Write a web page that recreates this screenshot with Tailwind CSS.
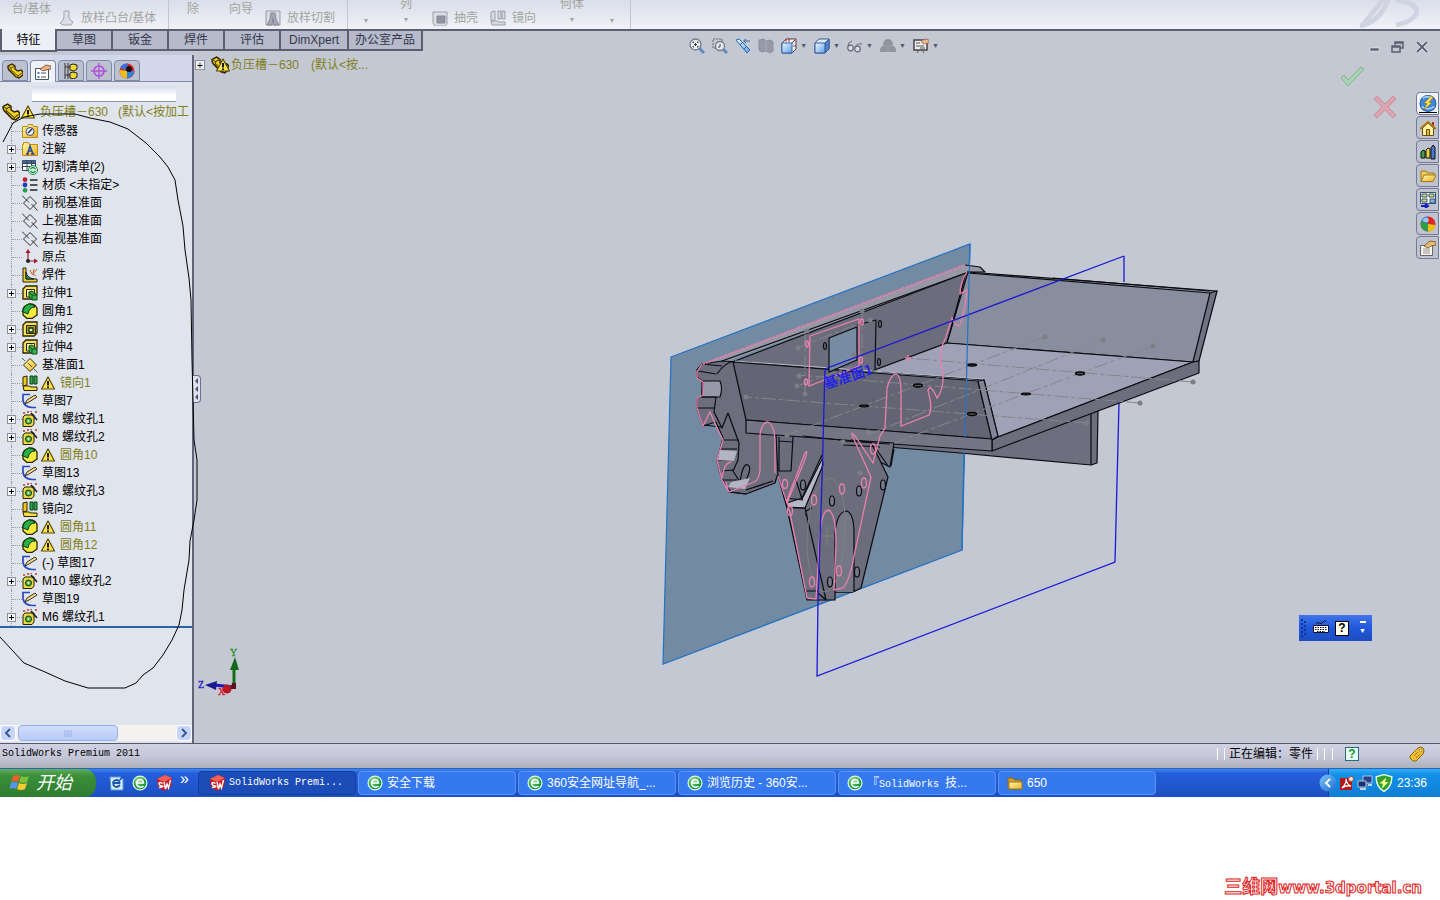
<!DOCTYPE html>
<html lang="zh-CN">
<head>
<meta charset="utf-8">
<meta name="viewport" content="width=device-width, initial-scale=1">
<title>SolidWorks Premium 2011</title>
<script src="https://cdn.jsdelivr.net/npm/@tailwindcss/browser@4"></script>
</head>
<body class="flex min-h-screen flex-col bg-white font-['Liberation_Sans','Noto_Sans_CJK_SC',sans-serif] text-xs text-black">

<!-- Shared icon definitions -->
<svg class="absolute size-0" aria-hidden="true">
  <linearGradient id="gold" x2="1" y2="1"><stop stop-color="#fffbb0"/><stop offset="1" stop-color="#e8b020"/></linearGradient>
  <linearGradient id="blueFace" y2="1" x2="1"><stop stop-color="#f4faff"/><stop offset="1" stop-color="#5a9ee8"/></linearGradient>
  <radialGradient id="greenBall" cx=".4" cy=".3"><stop stop-color="#a8f0a0"/><stop offset="1" stop-color="#159a35"/></radialGradient>
  <linearGradient id="glow" y2="1"><stop stop-color="#7cc4f8"/><stop offset="1" stop-color="#1a6cd0"/></linearGradient>
  <symbol id="part" viewBox="0 0 16 16"><path d="M1 3l4-2 3 2v3l3 2 3-1 2 2v3l-4 3-3-1-7-7-1-2z" fill="#f0d020" stroke="#2a2000" stroke-width="1.3"/><path d="M1 3l3 2 4-2M4 5v2l7 6 4-3M11 13v2" fill="none" stroke="#5a4300"/></symbol>
  <symbol id="warn" viewBox="0 0 16 16"><path d="M8 2l6.500 12h-13z" fill="#ffe450" stroke="#5a4800" stroke-width="1.200" stroke-linejoin="round"/><path d="M8 6v4.500M8 11.500v1.500" stroke="#000" stroke-width="1.800"/></symbol>
  <symbol id="sensor" viewBox="0 0 16 16"><path d="M.5 3.500h5l1-2h4l1 2h4v11H.5z" fill="url(#gold)" stroke="#c08a10"/><circle cx="8" cy="8.500" r="4" fill="#e8f0f8" stroke="#446"/><path d="M6 10l4-4" stroke="#225" stroke-width="1.500"/></symbol>
  <symbol id="note" viewBox="0 0 16 16"><path d="M.5 3.500h1v-2h5l1 2h8v11H.5z" fill="url(#gold)" stroke="#c08a10"/><path d="M4 13h3M9 13h3.500M5.500 13L8 5l3 8M6 10h4" fill="none" stroke="#234a9a" stroke-width="1.500"/></symbol>
  <symbol id="cut" viewBox="0 0 16 16"><path d="M.5 1.500h13v10H.5z" fill="#fff" stroke="#345"/><path d="M.5 1.500h13v3H.5z" fill="#47669a"/><path d="M.5 7.500h13M.5 4.500h13M5 2v10M9.500 2v10" stroke="#345"/><circle cx="11" cy="11" r="4.500" fill="#d8f8dc" stroke="#18904a"/><path d="M8.500 10q2.500-3 5 0M13.500 12q-2.500 3-5 0" fill="none" stroke="#18904a" stroke-width="1.300"/></symbol>
  <symbol id="mat" viewBox="0 0 16 16"><circle cx="3" cy="2.700" r="2.400" fill="#c02030"/><circle cx="3" cy="8" r="2.400" fill="#2040c0"/><circle cx="3" cy="13.300" r="2.400" fill="#20a050"/><path d="M8 3h7.500M8 8h7.500M8 13h7.500" stroke="#222" stroke-width="1.300"/></symbol>
  <symbol id="plane" viewBox="0 0 16 16"><path d="M8 1.500l6.500 6.500L8 14.500 1.500 8zM0 .5l7 7M9.500 9l6 6.500" fill="none" stroke="#333"/></symbol>
  <symbol id="planeY" viewBox="0 0 16 16"><path d="M8 1.500l6.500 6.500L8 14.500 1.500 8z" fill="url(#gold)" stroke="#3a3000"/><path d="M0 1l3 3M12 12l3.500 3.500" stroke="#3a6a30"/><path d="M6 6l4 4" stroke="#5a4800"/></symbol>
  <symbol id="origin" viewBox="0 0 16 16"><path d="M6 12V3M6 12h8" fill="none" stroke="#a01828" stroke-width="1.200"/><path d="M3.500 4L6 0l2.500 4zM12 9.500l4 2.500-4 2.500z" fill="#a01828"/><circle cx="6" cy="12" r="2" fill="#222"/></symbol>
  <symbol id="weld" viewBox="0 0 16 16"><path d="M1 1h3v11h11v3H1z" fill="#f0d020" stroke="#222"/><path d="M4 12V5q1 6 8 7z" fill="#28a040" stroke="#123"/><path d="M15 2l-5 6M8 3l2 4M14 9l-3-2M12 2l-1 4" stroke="#c06030"/></symbol>
  <symbol id="ext" viewBox="0 0 16 16"><path d="M1 4l3-3h11v8l-2 5H1z" fill="#f4e060" stroke="#2a2400" stroke-width="1.300"/><path d="M4.500 4.500h8V12h-8z" fill="#f8f0a0" stroke="#2a2400"/><path d="M7 7l3-1 5 4v5h-5l-3-3z" fill="#3ab04a" stroke="#0a4a18"/><path d="M7 7l3 3v5M10 10h5" fill="none" stroke="#0a4a18"/></symbol>
  <symbol id="extcut" viewBox="0 0 16 16"><path d="M1 4l3-3h11v11l-3 3H1z" fill="#f4e060" stroke="#2a2400" stroke-width="1.300"/><path d="M4.500 4.500h9v8h-9z" fill="#b89c20" stroke="#2a2400"/><path d="M7 7h4v4H7z" fill="#d0f0c0" stroke="#0a3a10" stroke-width="1.300"/></symbol>
  <symbol id="fillet" viewBox="0 0 16 16"><path d="M1 9Q0 3 7 1q5-1 8 4v7l-5 3.500H5L1 12z" fill="#f8e840" stroke="#2a2400" stroke-width="1.300"/><path d="M1 9Q1 3 7 1q4 0 6 3-6 0-7 7z" fill="#28b048" stroke="#0a4018"/></symbol>
  <symbol id="mirror" viewBox="0 0 16 16"><path d="M1 2l4-1v9l-4 1z" fill="#f0c820" stroke="#2a2400"/><path d="M8 1h3v8H8zM12 1h3v8h-3z" fill="#30a848" stroke="#0a4018"/><path d="M1 11h6l2 1h6v3.500H2z" fill="#f8e040" stroke="#2a2400"/></symbol>
  <symbol id="sketch" viewBox="0 0 16 16"><path d="M8 1.500H1v6Q2 14 10 14.500h4" fill="none" stroke="#2a48c0" stroke-width="1.700"/><path d="M3 11l2-4 8-5 2 2-8 5z" fill="#f4d890" stroke="#3a3020"/></symbol>
  <symbol id="hole" viewBox="0 0 16 16"><path d="M1 6l2-2h9v9l-2 2.500H1z" fill="#e8d848" stroke="#2a2400"/><circle cx="6.500" cy="10" r="3" fill="#58b848" stroke="#0a3a10"/><circle cx="6.500" cy="10" r="1" fill="#e8ffd0"/><path d="M9 2l6 7" stroke="#222" stroke-width="1.700"/><path d="M1 2h2M5 1h2M8 0h2M13 1h2" stroke="#c03820" stroke-width="1.500"/></symbol>
  <symbol id="props" viewBox="0 0 16 16"><path d="M.5 4.500h13v11H.5z" fill="#fff" stroke="#456"/><path d="M2.500 8h2v2h-2zM2.500 12h2v2h-2z" fill="#4a78c0"/><path d="M6 9h5M6 13h5" stroke="#555"/><path d="M5 5l6-4 5 1v3l-5 1-3 1z" fill="#e8b088" stroke="#7a4a28" stroke-width=".8"/></symbol>
  <symbol id="sheet" viewBox="0 0 16 16"><path d="M.5 5.500h12v10H.5z" fill="#f4f2ea" stroke="#666"/><path d="M3 9h7M3 11h7M3 13h7" stroke="#999"/><path d="M4 6l6-5 6 1v3l-5 1-3 2z" fill="#e8bc78" stroke="#6a4a18" stroke-width=".8"/></symbol>
  <symbol id="config" viewBox="0 0 16 16"><path d="M2 0v16M2 4h5M2 12h5M5 0v16" stroke="#333"/><path d="M7 2l3-1 4 1v4l-3 2-4-1zM7 10l3-1 4 1v4l-3 2-4-1z" fill="#f0d830" stroke="#222"/></symbol>
  <symbol id="target" viewBox="0 0 16 16"><circle cx="8" cy="8" r="5" fill="none" stroke="#b050d8" stroke-width="1.700"/><path d="M8 0v16M0 8h16" stroke="#b050d8" stroke-width="1.300"/></symbol>
  <symbol id="ball" viewBox="0 0 16 16"><circle cx="8" cy="8" r="7.500" fill="#d82828"/><path d="M8 8L1 5Q3 0 8 .5z" fill="#4888d8"/><path d="M8 8L1 5Q-1 14 8 15.500z" fill="#28a048"/><path d="M8 8v7.500Q15 15 15.500 9z" fill="#f0c018"/><ellipse cx="6" cy="4" rx="3" ry="2" fill="#fff" opacity=".5"/></symbol>
  <symbol id="appear" viewBox="0 0 16 16"><circle cx="8" cy="8" r="7.500" fill="#d82828"/><path d="M8 8L1 5Q3 0 9 .5z" fill="#4070d8"/><path d="M8 8L.6 7Q1 15 8 15.500z" fill="#f0c010"/><path d="M8 8v7.500Q14 15 15.500 8z" fill="#3080e0"/><circle cx="10" cy="6" r="3" fill="#200808"/></symbol>
  <symbol id="e360" viewBox="0 0 16 16"><circle cx="8" cy="8" r="7.500" fill="#e8ffe8"/><circle cx="8" cy="8" r="6.300" fill="url(#greenBall)"/><path d="M11.500 11Q9 13.500 5.500 11 3 7.500 6.500 5q4-2 5 3H5" fill="none" stroke="#fff" stroke-width="1.600"/></symbol>
  <symbol id="swlogo" viewBox="0 0 16 16"><path d="M1 4l8-4 7 3-1 9-7 4-6-4z" fill="#c81820"/><path d="M1 4l8-4 7 3-8 4z" fill="#f06058"/><path d="M6.500 8.500Q3 6.500 3 8.500t3 2.500-3 1.500M8 7l1.500 7 1.500-5 1.500 4 2-8" fill="none" stroke="#fff" stroke-width="1.400"/></symbol>
  <symbol id="folder" viewBox="0 0 16 16"><path d="M1 13V3h5l1.500 2H14v2" fill="#f0c850" stroke="#a07818"/><path d="M1 13.500L4 7h12l-3 6.500z" fill="url(#gold)" stroke="#a07818"/></symbol>
  <symbol id="folderShut" viewBox="0 0 16 16"><path d="M1 13V3h5l1.500 2H14v9H2z" fill="#d8a030" stroke="#8a6410"/><path d="M2 14V7h13v7z" fill="url(#gold)" stroke="#a07818"/></symbol>
  <symbol id="ie" viewBox="0 0 16 16"><path d="M2 2h11l2 2v11H3z" fill="#d8ecf8" stroke="#5a98d0"/><path d="M12 5l3-4M12 10Q8 14 5.500 10 4 6 8 5q4 0 3.500 3H6" fill="none" stroke="#1858b0" stroke-width="1.800"/></symbol>
  <symbol id="mag" viewBox="0 0 16 16"><path d="M10 10l5 5" stroke="#5f8cc0" stroke-width="3"/><circle cx="6.500" cy="6.500" r="5.500" fill="#e8edf3" stroke="#737985" stroke-width="1.300"/><path d="M4 5V4h1M8 4h1v1M9 8v1H8M5 9H4V8M5 6.500h3M6.500 5v3" fill="none" stroke="#333"/></symbol>
  <symbol id="magbox" viewBox="0 0 16 16"><path d="M1 1h9v9H1z" fill="none" stroke="#666" stroke-dasharray="2 1"/><path d="M11 11l4 4" stroke="#5f8cc0" stroke-width="3"/><circle cx="8" cy="8" r="4.500" fill="#e4e9f2" stroke="#737985" stroke-width="1.300"/><path d="M8 6v3H6" fill="none" stroke="#444"/></symbol>
  <symbol id="scope" viewBox="0 0 16 16"><path d="M1 2l3-1 11 11-3 3z" fill="url(#blueFace)" stroke="#2868b0"/><path d="M5 7l3-3M9 11l3-3" stroke="#2868b0"/><path d="M15 3H9M11 1L8.500 3 11 5" fill="none" stroke="#4060b0"/></symbol>
  <symbol id="section" viewBox="0 0 16 16"><path d="M1 2l5-1 2 2 5-1 2 2v9l-3 2-4-2-4 1-3-2z" fill="#949aa8" stroke="#8a90a0"/><path d="M8 3v10" stroke="#aeb3c0"/></symbol>
  <symbol id="vieworient" viewBox="0 0 16 16"><path d="M1 5l4-4h10v10l-4 4H1z" fill="#eef2f8" stroke="#444"/><path d="M1 5h10v10H1z" fill="url(#blueFace)" stroke="#2868b0"/><path d="M8 0v4M15 8h-3M11 5l4-4M5 1v3" stroke="#c02828"/></symbol>
  <symbol id="cube" viewBox="0 0 16 16"><path d="M1 5l4-4h10v10l-4 4H1z" fill="#d8eafc" stroke="#3a5a98"/><path d="M11 5l4-4v10l-4 4z" fill="#5088d0" stroke="#3a5a98"/><path d="M1 5h10v10H1z" fill="url(#blueFace)" stroke="#3a5a98"/></symbol>
  <symbol id="glasses" viewBox="0 0 16 16"><path d="M1 8q0-4 4-5M8 9q2-4 7-3" fill="none" stroke="#667"/><circle cx="3.500" cy="10" r="2.800" fill="#d8dde6" stroke="#667" stroke-width="1.200"/><circle cx="10.500" cy="11" r="2.800" fill="#d8dde6" stroke="#667" stroke-width="1.200"/></symbol>
  <symbol id="scene" viewBox="0 0 16 16"><path d="M0 12q1-4 3-4Q3 1 8 1t5 7q2 0 3 4v2H0z" fill="#8e939e"/><path d="M3 8h10M8 8v6" stroke="#a0a5b0"/></symbol>
  <symbol id="screen" viewBox="0 0 16 16"><path d="M1 2h13v10H1z" fill="#eee" stroke="#444" stroke-width="1.500"/><path d="M3 5h4M3 8h8M4 15l2-3M11 15l-2-3M7 10h5" stroke="#555"/><path d="M8 3l4-2 4 1v3l-6 1z" fill="#e8b888" stroke="#855" stroke-width=".6"/></symbol>
  <symbol id="home" viewBox="0 0 16 16"><path d="M12 2h2v5h-2z" fill="#b03020"/><path d="M2.500 8v7.500h11V8L8 3z" fill="#fff2a0" stroke="#6a4a10"/><path d="M0 9l8-7 8 7" fill="none" stroke="#a87818" stroke-width="2"/><path d="M6.500 9.500h3v6h-3z" fill="#f0b838" stroke="#6a4a10"/></symbol>
  <symbol id="library" viewBox="0 0 16 16"><path d="M1 8l2-2 2 1v7H1z" fill="#40a048" stroke="#111"/><path d="M6 6l2-2 2 1v9H6z" fill="#e8d838" stroke="#111"/><path d="M11 4l2-3 2 2v12h-4z" fill="#4878d0" stroke="#111"/></symbol>
  <symbol id="palette" viewBox="0 0 16 16"><path d="M.5.5h15v11H.5z" fill="#f8faf0" stroke="#357"/><path d="M2 2h5v3H2zM9 2h5v3H9zM2 7h5v3H2z" fill="#e0dc70" stroke="#357"/><path d="M10 7h5v4h-5z" fill="#8ab0e0" stroke="#357"/><path d="M1 14h6M5 11.500L8 14l-3 2" fill="none" stroke="#1820c0" stroke-width="2"/></symbol>
  <symbol id="globe" viewBox="0 0 16 16"><circle cx="8" cy="8" r="7.500" fill="#3c88e0" stroke="#28569a"/><path d="M3 3q5-3 9 0M2 11q6 4 12 0" fill="none" stroke="#a8d4ff" stroke-width="1.500"/><path d="M11 1L4 8h3l-3 6 8-7H9l4-5z" fill="#ffe850" stroke="#886a10" stroke-width=".6"/></symbol>
  <symbol id="loft" viewBox="0 0 16 16"><path d="M5 1h5v6q0 3 4 5l-2 3H4l-3-2q4-3 4-6z" fill="#dcdee7" stroke="#a1a4b1"/></symbol>
  <symbol id="loftcut" viewBox="0 0 16 16"><path d="M1 1h14v14H1z" fill="#d8dae4" stroke="#9a9eaa"/><path d="M6 3h4q0 7 4 12H9L8 8l-1 7H2Q6 10 6 3z" fill="#a5a8b4" stroke="#858996"/></symbol>
  <symbol id="shell" viewBox="0 0 16 16"><path d="M1 2h14v12l-2 2H3L1 13z" fill="#dcdee6" stroke="#9a9eaa"/><path d="M5 6h8v7H5z" fill="#9296a4" stroke="#858996"/></symbol>
  <symbol id="mirrorG" viewBox="0 0 16 16"><path d="M1 2l4-1v9l-4 1zM8 1h3v8H8zM12 1h3v8h-3zM1 11h6l2 1h6v3H2z" fill="#d8dae2" stroke="#9a9eaa"/></symbol>
</svg>

<!-- Command ribbon, scrolled so only its lower part shows -->
<header class="relative flex h-[31px] overflow-hidden border-b-2 border-[#5b5f72] bg-linear-to-b from-[#dadeea] to-[#f0f2f7] text-[#a2a59f]">
  <div class="flex w-[169px] shrink-0 border-r border-[#c2c5d2] leading-4">
    <button class="w-[59px] pl-1 pb-3">台/基体</button>
    <button class="flex items-center gap-1.5 pt-1.5"><svg class="size-4"><use href="#loft"/></svg>放样凸台/基体</button>
  </div>
  <div class="flex w-[179px] shrink-0 border-r border-[#c2c5d2] leading-4">
    <button class="w-12 pb-3">除</button>
    <button class="w-12 pb-3">向导</button>
    <button class="flex items-center gap-1.5 pt-1.5"><svg class="size-4"><use href="#loftcut"/></svg>放样切割</button>
  </div>
  <div class="flex w-[283px] shrink-0 border-r border-[#c2c5d2] leading-4">
    <button class="w-9 pt-3 text-[8px]">▾</button>
    <button class="flex w-11 flex-col items-center"><span class="-mt-1">列</span><span class="text-[8px]">▾</span></button>
    <button class="ml-1 flex items-center gap-1.5 pt-1.5"><svg class="size-4"><use href="#shell"/></svg>抽壳</button>
    <button class="ml-3 flex items-center gap-1.5 pt-1.5"><svg class="size-4"><use href="#mirrorG"/></svg>镜向</button>
    <button class="ml-3 flex w-12 flex-col items-center"><span class="-mt-1">何体</span><span class="text-[8px]">▾</span></button>
    <button class="w-8 pt-3 text-[8px]">▾</button>
  </div>
  <svg class="ml-auto h-8 w-24 shrink-0" viewBox="0 0 96 32"><path d="M16 26Q36 22 44 0M18 26L42-4M52 0q24 4 20 14-4 8-20 11" fill="none" stroke="#cfd3e2" stroke-width="5"/></svg>
</header>

<main class="relative flex h-[712px] flex-col bg-[#c4c8d3]">
  <!-- Tab strip and view toolbar -->
  <div class="relative flex h-6 shrink-0 items-start justify-between">
    <nav class="z-10 flex text-xs leading-4 text-[#34384a]">
      <button class="-mt-0.5 h-[23px] w-[57px] border-x-2 border-b-2 border-[#5b5f72] bg-[#eceff5] text-black">特征</button>
      <button class="h-5 w-14 border-r-2 border-b-2 border-[#5b5f72] bg-[#b6bacb]">草图</button>
      <button class="h-5 w-14 border-r-2 border-b-2 border-[#5b5f72] bg-[#b6bacb]">钣金</button>
      <button class="h-5 w-14 border-r-2 border-b-2 border-[#5b5f72] bg-[#b6bacb]">焊件</button>
      <button class="h-5 w-14 border-r-2 border-b-2 border-[#5b5f72] bg-[#b6bacb]">评估</button>
      <button class="h-5 w-[68px] border-r-2 border-b-2 border-[#5b5f72] bg-[#b6bacb]">DimXpert</button>
      <button class="h-5 w-[74px] border-r-2 border-b-2 border-[#5b5f72] bg-[#b6bacb]">办公室产品</button>
    </nav>
    <div class="absolute inset-x-0 top-[7px] flex justify-center gap-[7px] pl-[188px] text-[7px] leading-4 text-[#555a6a]">
      <button aria-label="整屏显示"><svg class="size-4"><use href="#mag"/></svg></button>
      <button aria-label="局部放大"><svg class="size-4"><use href="#magbox"/></svg></button>
      <button aria-label="上一视图"><svg class="size-4"><use href="#scope"/></svg></button>
      <button aria-label="剖面视图"><svg class="size-4"><use href="#section"/></svg></button>
      <button aria-label="视图定向" class="flex items-center gap-[3px]"><svg class="size-4"><use href="#vieworient"/></svg>▼</button>
      <button aria-label="显示样式" class="flex items-center gap-[3px]"><svg class="size-4"><use href="#cube"/></svg>▼</button>
      <button aria-label="隐藏项目" class="flex items-center gap-[3px]"><svg class="size-4"><use href="#glasses"/></svg>▼</button>
      <button aria-label="应用布景" class="flex items-center gap-[3px]"><svg class="size-4"><use href="#scene"/></svg>▼</button>
      <button aria-label="视图设定" class="flex items-center gap-[3px]"><svg class="size-4"><use href="#screen"/></svg>▼</button>
    </div>
    <div class="z-10 flex gap-2.5 pt-2 pr-3">
      <button aria-label="最小化"><svg class="h-4 w-3" viewBox="0 0 12 16"><path d="M2 9h9v3H2z" fill="#5b6072" stroke="#fff" stroke-width=".5"/></svg></button>
      <button aria-label="还原"><svg class="size-4" viewBox="0 0 16 16"><path d="M5 6V3h8v6h-3M5 4h8M2 7h8v6H2zM2 8h8" fill="none" stroke="#5b6072" stroke-width="1.500"/></svg></button>
      <button aria-label="关闭"><svg class="h-4 w-3" viewBox="0 0 12 16"><path d="M1 3l10 10M11 3L1 13" stroke="#fff" stroke-width="3"/><path d="M1 3l10 10M11 3L1 13" stroke="#5b6072" stroke-width="2"/></svg></button>
    </div>
  </div>

  <div class="flex min-h-0 flex-1">
    <!-- Feature manager -->
    <aside class="relative flex w-[194px] shrink-0 flex-col border-r-2 border-[#60657a] bg-[#e0e4ec]">
      <div class="flex h-[27px] items-end gap-0.5 border-b border-[#7f8aa8] bg-[#d2d7ea] pl-0.5">
        <button aria-label="设计树" class="flex h-[21px] w-[26px] items-center justify-center rounded-t border border-[#7f8aa8] bg-[#bcc1d0]"><svg class="size-4"><use href="#part"/></svg></button>
        <button aria-label="属性" class="-mb-px flex h-[22px] w-[26px] items-center justify-center rounded-t border border-b-0 border-[#7f8aa8] bg-[#eef1f7]"><svg class="size-4"><use href="#props"/></svg></button>
        <button aria-label="配置" class="flex h-[21px] w-[26px] items-center justify-center rounded-t border border-[#7f8aa8] bg-[#bcc1d0]"><svg class="size-4"><use href="#config"/></svg></button>
        <button aria-label="尺寸专家" class="flex h-[21px] w-[26px] items-center justify-center rounded-t border border-[#7f8aa8] bg-[#bcc1d0]"><svg class="size-4"><use href="#target"/></svg></button>
        <button aria-label="外观" class="flex h-[21px] w-[26px] items-center justify-center rounded-t border border-[#7f8aa8] bg-[#bcc1d0]"><svg class="size-4"><use href="#appear"/></svg></button>
      </div>
      <input aria-label="过滤" class="mt-1 mr-4 ml-8 h-4 border-b border-[#8d92ab] bg-linear-to-b from-[#d4d9ec] to-white to-60%">
      <div class="flex h-5 items-center pl-0.5 whitespace-nowrap text-[#80801a]">
        <svg class="size-[18px] shrink-0"><use href="#part"/></svg><svg class="size-4 shrink-0"><use href="#warn"/></svg><span class="pl-1">负压槽－630</span><span class="pl-2.5">(默认&lt;按加工</span>
      </div>
      <ul id="tree" class="flex-1"></ul>
      <!-- Horizontal scrollbar -->
      <div class="mb-0.5 flex h-4 items-stretch bg-[#f3f2ee]">
        <button aria-label="向左" class="flex w-4 items-center justify-center rounded-sm border border-white bg-[#c6d5fb]"><svg class="size-2.5" viewBox="0 0 10 10"><path d="M7 1L3 5l4 4" fill="none" stroke="#3d5a90" stroke-width="2"/></svg></button>
        <button aria-label="滚动条" class="ml-0.5 w-[100px] rounded-sm border border-[#98b0e8] bg-linear-to-b from-[#d0defe] to-[#b8cbf8] text-[8px] leading-3 text-[#8ca6e0]">||||</button>
        <button aria-label="向右" class="ml-auto flex w-4 items-center justify-center rounded-sm border border-white bg-[#c6d5fb]"><svg class="size-2.5" viewBox="0 0 10 10"><path d="M3 1l4 4-4 4" fill="none" stroke="#3d5a90" stroke-width="2"/></svg></button>
      </div>
      <button aria-label="折叠面板" class="absolute top-80 -right-[9px] z-10 h-7 w-2 rounded-r border border-l-0 border-[#6a7090] bg-[#dfe2ee]"><svg class="h-6 w-1.5" viewBox="0 0 6 24"><path d="M5 1v6L2 4zM5 9v6l-3-3zM5 17v6l-3-3z" fill="#4a5070"/></svg></button>
    </aside>

    <!-- Graphics area -->
    <section class="relative min-w-0 flex-1">
      <svg class="absolute inset-0 size-full" viewBox="194 55 1246 688" role="img" aria-label="负压槽模型">
        <path d="M671 357L970 244L962 550L663 664z" fill="#728aa2" stroke="#2272c4" stroke-width="1.200"/>
        <!-- second datum plane outline, partly hidden by the tray -->
        <path d="M1124 256V282M1119 403L1115 562L817 676L818 600" fill="none" stroke="#1a1ad8" stroke-width="1.300"/>
        <g stroke="#0b0b10" stroke-width="1.200" stroke-linejoin="round">
          <path d="M703 364L965 265L980 267L985 272L967 274L722 363z" fill="#9698a6" stroke="none"/>
          <path d="M965 265L980 267L985 272L967 272M722 361L966 273" fill="none"/>
          <!-- notched end plate -->
          <path d="M702 364L722 361L740 362L758 420L850 433L852 448L805 460L777 476L775 483L746 494L731 492L722 480L717 461L723 438L716 422L703 426L697 408L697 398L702 396L702 381L697 377L697 370z" fill="#6c6e7d"/>
          <path d="M703 381H720Q723 388 720 397H702z" fill="#9799a9"/>
          <path d="M698 371L716 374M702 364L722 366M717 374Q725 362 735 361M702 397H716L714 412L722 428L728 413L739 443L738 460L733 471L740 482Q743 462 748 465Q752 467 747 478L744 486L731 482M698 408H714M703 425L722 427M723 440H739M720 449H737M717 460H733M722 471L733 470M722 480H737" fill="none"/>
          <path d="M720 450L737 451L734 461L718 460zM731 482L750 478L745 489L728 487z" fill="#b3b5c4" stroke="none"/>
          <path d="M728 492L746 494M746 490L773 481" fill="none"/>
          <path d="M735 361L966 273L947 343L875 370L871 373z" fill="#6b6d7c"/>
          <path d="M968 272L1217 291L1193 362L947 343z" fill="#898e9f"/>
          <path d="M968 273L1210 293M1053 278L1210 291" fill="none"/>
          <path d="M1210 293L1217 291L1199 361L1193 362z" fill="#6f7282"/>
          <path d="M888 440L992 449L1091 413L1098 411L1097 463L1091 465L960 453L888 447z" fill="#6d6f7e"/>
          <path d="M1091 413V465" fill="none"/>
          <path d="M947 343L1193 362L998 437L984 380L872 371z" fill="#9fa2b6"/>
          <path d="M998 437L1193 362L1199 361L1199 373L992 451L992 440z" fill="#6c6e7d"/>
          <path d="M733 362L978 381L992 439L746 420z" fill="#636574"/>
          <path d="M978 381L984 380L998 436L992 440z" fill="#82859a"/>
          <path d="M746 420L992 439L992 451L850 441L746 433z" fill="#747685"/>
          <path d="M735 361L983 379" fill="none" stroke="#b9bcc9" stroke-width="1"/>
          <!-- bracket -->
          <path d="M851 440L894 443L890 467L876 460z" fill="#707281"/><path d="M877 450L888 466M894 449L891 466" fill="none"/>
          <path d="M776 435L871 442L888 477L861 588L853 592H835V600H818L807 600L787 508L778 476z" fill="#6b6d7c"/>
          <path d="M779 437V471H791L793 437M779 441L792 442M779 471H790" fill="none"/>
          <path d="M787 503L802 498L822 455L823 465L805 508L787 507z" fill="#b5b8c8"/>
          <path d="M778 476L785 498L803 500M795 477L802 499L822 459M805 508L826 600L818 593M787 508H805M806 591H818M806 516V511L812 508M835 592H853M853 592V533M837 533H853" fill="none"/>
          <path d="M835 592V533Q837 511 847 511Q854 514 854 533V592" fill="#757786"/>
          <path d="M844 441L890 444M844 441V445L880 447M803 436L840 440" fill="none"/>
          <g fill="#777988"><ellipse cx="803" cy="485" rx="2.500" ry="5"/><ellipse cx="832" cy="501" rx="2.500" ry="5"/><ellipse cx="859" cy="491" rx="2.500" ry="5"/><ellipse cx="883" cy="485" rx="2.500" ry="5"/><ellipse cx="857" cy="572" rx="2.500" ry="5"/><ellipse cx="830" cy="582" rx="2.500" ry="5"/></g>
          <path d="M829 338L857 327V360L829 372z" fill="#778ca2"/>
          <path d="M857 325L876 320L875 369" fill="none"/>
          <g fill="none"><ellipse cx="825" cy="346" rx="1.500" ry="3.500"/><ellipse cx="880" cy="324" rx="1.500" ry="3.500"/><ellipse cx="879" cy="362" rx="1.500" ry="3.500"/></g>
        </g>
        <!-- centre lines -->
        <g fill="none" stroke="#85868c" stroke-width="1" stroke-dasharray="14 3 4 3">
          <path d="M1045 337L787 435M1103 340L865 436M1153 346L894 443M1193 382L907 358M1140 403L798 375M1087 423L746 397M797 348L863 322M800 385L853 366M805 331V394M862 310V368"/>
        </g>
        <g fill="#7c7e84"><circle cx="1045" cy="337" r="2.500"/><circle cx="1103" cy="340" r="2.500"/><circle cx="1153" cy="346" r="2.500"/><circle cx="1193" cy="382" r="2.500"/><circle cx="1140" cy="403" r="2.500"/><circle cx="1087" cy="423" r="2.500"/><circle cx="746" cy="397" r="2.500"/><circle cx="787" cy="435" r="2.500"/><circle cx="798" cy="348" r="2.500"/><circle cx="799" cy="376" r="2.500"/><circle cx="797" cy="386" r="2.500"/><circle cx="805" cy="394" r="2.500"/><circle cx="807" cy="331" r="2.500"/><circle cx="862" cy="311" r="2.500"/><circle cx="870" cy="320" r="2.500"/><circle cx="854" cy="355" r="2.500"/><circle cx="868" cy="432" r="2.500"/><circle cx="860" cy="473" r="2.500"/><circle cx="843" cy="442" r="2.500"/></g>
        <path d="M807 545Q808 482 831 478Q847 485 845 540Q839 590 825 592Q809 589 807 545M827 526V546M821 536H834" fill="none" stroke="#7f8078"/>
        <g fill="#555" stroke="#000" stroke-width="1.300"><ellipse cx="972" cy="365" rx="4.500" ry="1"/><ellipse cx="1080" cy="373.500" rx="4.500" ry="1.500"/><ellipse cx="918" cy="385.500" rx="4.500" ry="1.500"/><ellipse cx="1026" cy="394" rx="4.500" ry=".8"/><ellipse cx="864" cy="406" rx="4.500" ry=".8"/><ellipse cx="972" cy="414" rx="4.500" ry="1.500"/></g>
        <!-- active sketch -->
        <g fill="none" stroke="#ea80ae" stroke-width="1.300">
          <path d="M703 364L965 265" stroke-width="2" stroke-dasharray="2 1"/>
          <path d="M702 364L697 372V378L703 382V395L697 398V408L703 426L710 412L717 428L723 440L717 460L722 480L729 492L754 482Q759 480 760 470L760 435Q762 422 768 422Q775 425 775 445V473M728 490L726 482M722 478Q724 463 731 462"/>
          <path d="M778 476L787 503L804 462Q809 448 805 453L787 500L790 513L807 598L816 599L819 550Q820 512 828 510Q836 512 836 545L834 590L843 588Q850 580 854 556L871 477L852 435Q851 431 855 436L873 463L880 436L885 428L887 388Q891 374 896 374Q901 376 901 390V426L929 415Q933 408 928 391Q930 382 937 398Q944 390 943 372Q936 356 946 337L952 318Q959 334 962 318Q966 304 967 290L960 294Q960 283 967 272"/>
          <path d="M810 336L859 319V366L809 386z"/>
          <ellipse cx="785" cy="484" rx="2.500" ry="4.500"/><ellipse cx="790" cy="511" rx="2.500" ry="4.500"/><ellipse cx="814" cy="500" rx="2.500" ry="5"/><ellipse cx="842" cy="489" rx="2.500" ry="5"/><ellipse cx="864" cy="483" rx="2.500" ry="5"/><ellipse cx="873" cy="449" rx="2.500" ry="5"/><ellipse cx="812" cy="582" rx="2.500" ry="5"/><ellipse cx="839" cy="571" rx="2.500" ry="5"/>
          <ellipse cx="807" cy="344" rx="1.500" ry="3"/><ellipse cx="862" cy="322" rx="1.500" ry="3"/><ellipse cx="861" cy="360" rx="1.500" ry="3"/><ellipse cx="806" cy="382" rx="1.500" ry="3"/><path d="M905 358h6M908 355v6"/>
        </g>
        <path d="M1124 256L825 369L822 480L818 600" fill="none" stroke="#1a1ad0" stroke-width="1.300"/>
        <path d="M970 244L965 437M964 452L962 550" stroke="#2272c4" stroke-width="1.200"/>
        <text x="826" y="389" transform="rotate(-18 826 389)" font-size="14" font-weight="700" fill="#2626e4" font-family="Noto Sans CJK SC, sans-serif">基准面1</text>
        <!-- orientation triad -->
        <path d="M234 687V668" stroke="#157015" stroke-width="3"/><path d="M230 670L235 657L239 670z" fill="#126a16"/>
        <path d="M234 687L214 685" stroke="#1818c0" stroke-width="3"/><path d="M217 681L205 685L216 690z" fill="#181a90"/>
        <circle cx="227" cy="689" r="4.500" fill="#b81822"/><path d="M232 683h4v6h-5z" fill="#601018"/>
        <g font-size="10" font-family="Liberation Serif, serif" stroke-width=".3"><text x="230" y="656" fill="#1c901c" stroke="#1c901c">Y</text><text x="198" y="688" fill="#1a1ac8" stroke="#1a1ac8">Z</text><text x="218" y="695" fill="#d02030" stroke="#d02030">X</text></g>
      </svg>

      <div class="absolute top-0 left-px flex h-5 items-center text-[#80801a]">
        <button aria-label="展开" class="size-2.5 border border-[#8a8f9c] bg-[#eceff4] text-[10px] leading-[7px] text-black">+</button>
        <svg class="ml-1.5 size-[18px]"><use href="#part"/></svg><svg class="-ml-3.5 size-4"><use href="#warn"/></svg>
        <span>负压槽－630</span><span class="pl-3">(默认&lt;按...</span>
      </div>
      <button aria-label="确定" class="absolute top-2.5 right-[74px]"><svg class="h-6 w-7" viewBox="0 0 28 24"><path d="M3 13l3-3 4 5L23 2l3 2-16 17z" fill="#a9d3b2" stroke="#80b48b"/></svg></button>
      <button aria-label="取消" class="absolute top-10 right-[43px]"><svg class="size-6" viewBox="0 0 24 24"><path d="M1 4l3-3 8 8 8-8 3 3-8 8 8 8-3 3-8-8-8 8-3-3 8-8z" fill="#dba4ae" stroke="#c98e99"/></svg></button>

      <!-- Task pane tabs -->
      <div class="absolute top-[37px] right-0 flex w-6 flex-col gap-px border-r border-[#dfe2ea]">
        <button aria-label="资源" class="flex h-[23px] items-center justify-center rounded-l border border-[#747b98] bg-[#f2f4fa]"><svg class="size-[18px] border-b border-black"><use href="#globe"/></svg></button>
        <button aria-label="主页" class="flex h-[23px] items-center justify-center rounded-l border border-[#747b98] bg-[#bfc3d0]"><svg class="size-4"><use href="#home"/></svg></button>
        <button aria-label="设计库" class="flex h-[23px] items-center justify-center rounded-l border border-[#747b98] bg-[#bfc3d0]"><svg class="size-4"><use href="#library"/></svg></button>
        <button aria-label="文件" class="flex h-[23px] items-center justify-center rounded-l border border-[#747b98] bg-[#bfc3d0]"><svg class="size-4"><use href="#folder"/></svg></button>
        <button aria-label="视图调色板" class="flex h-[23px] items-center justify-center rounded-l border border-[#747b98] bg-[#bfc3d0]"><svg class="size-4"><use href="#palette"/></svg></button>
        <button aria-label="外观布景" class="flex h-[23px] items-center justify-center rounded-l border border-[#747b98] bg-[#bfc3d0]"><svg class="size-4"><use href="#ball"/></svg></button>
        <button aria-label="自定义属性" class="flex h-[23px] items-center justify-center rounded-l border border-[#747b98] bg-[#bfc3d0]"><svg class="size-4"><use href="#sheet"/></svg></button>
      </div>

      <!-- Input method bar -->
      <div class="absolute right-[68px] bottom-[102px] flex h-[26px] w-[73px] items-center bg-linear-to-b from-[#3f74e8] via-[#2058dc] to-[#1c4cc0]">
        <svg class="ml-0.5 h-5 w-1.5" viewBox="0 0 6 20"><path d="M1 1v18M4 3v16" stroke="#12349a" stroke-width="2" stroke-dasharray="2 2"/></svg>
        <button aria-label="软键盘" class="ml-1.5"><svg class="size-4" viewBox="0 0 16 16"><path d="M3 4q1-3 3-1t4-1 3 0" fill="none" stroke="#112"/><path d="M.5 5.500h15v7H.5z" fill="#fff" stroke="#112"/><path d="M2 7.500h12M2 9.500h12M4 11.500h8" stroke="#112" stroke-dasharray="1.500 1"/></svg></button>
        <button aria-label="帮助" class="ml-1.5 h-[15px] w-3.5 border border-black bg-[#fffff0] text-xs leading-3 font-bold">?</button>
        <span class="ml-auto flex flex-col items-center gap-1 pr-1.5 text-[7px] leading-2 text-white"><i class="h-0.5 w-1.5 bg-white"></i>▼</span>
      </div>
    </section>
  </div>

  <!-- Freehand mark drawn round the feature tree -->
  <svg class="pointer-events-none absolute top-0 left-0 z-20 h-[712px] w-[210px]" viewBox="0 31 210 712">
    <path d="M3 142L13 123L24 117L40 114H75L90 118L110 122L128 129L146 143L160 157L168 167L175 180L178 200L183 226L185 250L189 278L191 300L192 360L193 400L194 440L197 460V500L194 520L190 541L189 560L184 590L182 610L179 625L172 640L163 655L153 668L143 675L136 683L125 688L88 688L65 681L45 672L24 663L12 650L0 637" fill="none" stroke="#000"/>
  </svg>
</main>

<!-- Status bar -->
<footer class="flex h-[25px] shrink-0 items-center border-t border-[#555a6e] bg-linear-to-b from-[#d0d2e4] via-[#c6c8da] to-[#adafb8] pb-1">
  <span class="pl-0.5 font-['Liberation_Mono',monospace] text-[10px]">SolidWorks Premium 2011</span>
  <span class="ml-auto h-3 w-2 border-x border-white"></span>
  <span class="px-1">正在编辑：零件</span>
  <span class="h-3 w-2 border-x border-white"></span><span class="h-3 w-2 border-r border-white"></span>
  <button aria-label="帮助" class="ml-3 size-3.5 border border-[#246a8c] bg-[#e8ffee] text-xs leading-3 font-bold text-[#109a30]">?</button>
  <button aria-label="标签" class="mr-[15px] ml-[50px]"><svg class="size-4" viewBox="0 0 16 16"><path d="M1 10l8-8q3-2 5 0 2 2 0 6l-7 7H4l-3-3z" fill="#f0c030" stroke="#8a6008"/><circle cx="11.500" cy="4.500" r="1.300" fill="#fff" stroke="#8a6008" stroke-width=".7"/><path d="M5 10l4-4M7 12l4-4" stroke="#a87818"/></svg></button>
</footer>

<!-- Desktop taskbar -->
<div class="flex h-[29px] shrink-0 items-stretch border-t border-[#2c63b8] bg-linear-to-b from-[#3f86f0] via-[#245edb] via-15% to-[#1d4fc4] text-white">
  <button class="flex w-24 shrink-0 items-center gap-1.5 rounded-r-xl bg-linear-to-b from-[#5fae5c] via-[#3a8f3a] via-25% to-[#2f7d2f] pl-2.5 text-lg leading-6 italic">
    <svg class="size-5" viewBox="0 0 20 20"><path d="M3 3q4-2 7 0L8 9Q5 7 1 9z" fill="#e8602c"/><path d="M11 3q4 2 8 0l-2 6q-4 2-8 0z" fill="#7cc03c"/><path d="M1 10q4-2 7 0l-2 6q-3-2-7 0z" fill="#5a94f0"/><path d="M9 10q4 2 8 0l-2 6q-4 2-8 0z" fill="#f8cc30"/></svg>开始</button>
  <div class="flex w-[102px] shrink-0 items-center gap-2 pl-3">
    <button aria-label="浏览器"><svg class="size-4"><use href="#ie"/></svg></button>
    <button aria-label="360浏览器"><svg class="size-4"><use href="#e360"/></svg></button>
    <button aria-label="SolidWorks"><svg class="size-4"><use href="#swlogo"/></svg></button>
    <button class="mb-2 text-base leading-4">»</button>
  </div>
  <div class="flex min-w-0 flex-1 items-stretch gap-0.5 pt-0.5 pb-0.5 whitespace-nowrap">
    <button class="flex w-[158px] items-center gap-1 rounded-sm border border-[#163f9c] bg-[#1c4cb8] pl-2.5"><svg class="size-4"><use href="#swlogo"/></svg><span class="font-['Liberation_Mono',monospace] text-[10px]">SolidWorks Premi...</span></button>
    <button class="flex w-[158px] items-center gap-1 rounded-sm border border-[#5a94f8] bg-[#3678ee] pl-2"><svg class="size-4"><use href="#e360"/></svg>安全下载</button>
    <button class="flex w-[158px] items-center gap-1 rounded-sm border border-[#5a94f8] bg-[#3678ee] pl-2"><svg class="size-4"><use href="#e360"/></svg>360安全网址导航_...</button>
    <button class="flex w-[158px] items-center gap-1 rounded-sm border border-[#5a94f8] bg-[#3678ee] pl-2"><svg class="size-4"><use href="#e360"/></svg>浏览历史 - 360安...</button>
    <button class="flex w-[158px] items-center gap-1 rounded-sm border border-[#5a94f8] bg-[#3678ee] pl-2"><svg class="size-4"><use href="#e360"/></svg><span>『<span class="font-['Liberation_Mono',monospace] text-[10px]">SolidWorks </span>技...</span></button>
    <button class="flex w-[158px] items-center gap-1 rounded-sm border border-[#5a94f8] bg-[#3678ee] pl-2"><svg class="size-4"><use href="#folderShut"/></svg>650</button>
  </div>
  <div class="flex w-28 shrink-0 items-center gap-0.5 border-l border-[#123e9c] bg-linear-to-b from-[#30b0f8] via-[#1290e8] via-20% to-[#0f7ed4]">
    <button aria-label="显示隐藏图标" class="-ml-2.5"><svg class="size-[18px]" viewBox="0 0 18 18"><circle cx="9" cy="9" r="8.500" fill="url(#glow)"/><path d="M11 5L7 9l4 4" fill="none" stroke="#fff" stroke-width="2"/></svg></button>
    <svg class="size-4" viewBox="0 0 16 16"><path d="M1 3h12v12H1z" fill="#b01818"/><path d="M3 13Q8 8 7 4q1 6 5 7-5-1-9 2" fill="none" stroke="#fff" stroke-width="1.300"/><circle cx="12" cy="4" r="2.500" fill="#f8e8d0" stroke="#a44"/></svg>
    <svg class="size-4" viewBox="0 0 16 16"><path d="M6 1h9v7H6z" fill="#26408c" stroke="#b8c4d8"/><path d="M1 6h8v6H1z" fill="#1c3070" stroke="#b8c4d8"/><path d="M3 14h6M11 10h4" stroke="#c8d0e0" stroke-width="2"/></svg>
    <svg class="size-[18px]" viewBox="0 0 16 16"><path d="M8 .5l7 2Q15 12 8 15.500 1 12 1 2.500z" fill="#30a030" stroke="#e8ffe0" stroke-width="1.200"/><path d="M10 3L4 8.500h3L6 13l6-6H9z" fill="#f8ff90"/></svg>
    <time class="pl-0.5 text-xs">23:36</time>
  </div>
</div>

<div class="flex flex-1 items-end justify-end pr-[18px] pb-0.5 font-['DejaVu_Sans','Noto_Sans_CJK_SC',sans-serif] text-[15px] leading-5 font-bold text-white">
  <a href="#" class="[-webkit-text-stroke:1px_#e01818]"><span class="text-lg leading-5">三维网</span>www.3dportal.cn</a>
</div>

<script>
  // [icon, label, expandable, warning]
  const features = [
    ['sensor', '传感器'], ['note', '注解', 1], ['cut', '切割清单(2)', 1], ['mat', '材质 <未指定>'],
    ['plane', '前视基准面'], ['plane', '上视基准面'], ['plane', '右视基准面'], ['origin', '原点'],
    ['weld', '焊件'], ['ext', '拉伸1', 1], ['fillet', '圆角1'], ['extcut', '拉伸2', 1], ['ext', '拉伸4', 1],
    ['planeY', '基准面1'], ['mirror', '镜向1', 0, 1], ['sketch', '草图7'], ['hole', 'M8 螺纹孔1', 1],
    ['hole', 'M8 螺纹孔2', 1], ['fillet', '圆角10', 0, 1], ['sketch', '草图13'], ['hole', 'M8 螺纹孔3', 1],
    ['mirror', '镜向2'], ['fillet', '圆角11', 0, 1], ['fillet', '圆角12', 0, 1], ['sketch', '(-) 草图17'],
    ['hole', 'M10 螺纹孔2', 1], ['sketch', '草图19'], ['hole', 'M6 螺纹孔1', 1]
  ];
  const esc = s => s.replace(/</g, '&lt;').replace(/>/g, '&gt;');
  document.getElementById('tree').innerHTML = features.map(([icon, label, open, warn]) => `
    <li class="flex h-[18px] items-center whitespace-nowrap">
      <span class="relative ml-[11px] flex h-full w-[11px] shrink-0 items-center border-l border-dotted border-[#9a9ea8]">
        <i class="w-full border-t border-dotted border-[#9a9ea8]"></i>
        ${open ? '<button aria-label="展开" class="absolute top-[5px] -left-[5px] size-[9px] border border-[#8a90a0] bg-[#f4f6fa]"><i class="absolute top-[3px] left-px h-px w-[5px] bg-black"></i><i class="absolute top-px left-[3px] h-[5px] w-px bg-black"></i></button>' : ''}
      </span>
      <svg class="size-4 shrink-0"><use href="#${icon}"/></svg>
      ${warn ? '<svg class="ml-0.5 size-4 shrink-0"><use href="#warn"/></svg>' : ''}
      <span class="${warn ? 'pl-1 text-[#80801a]' : 'pl-1'}">${esc(label)}</span>
    </li>`).join('') + '<li class="h-0.5 bg-[#2a62a4]"></li>';
</script>
</body>
</html>
